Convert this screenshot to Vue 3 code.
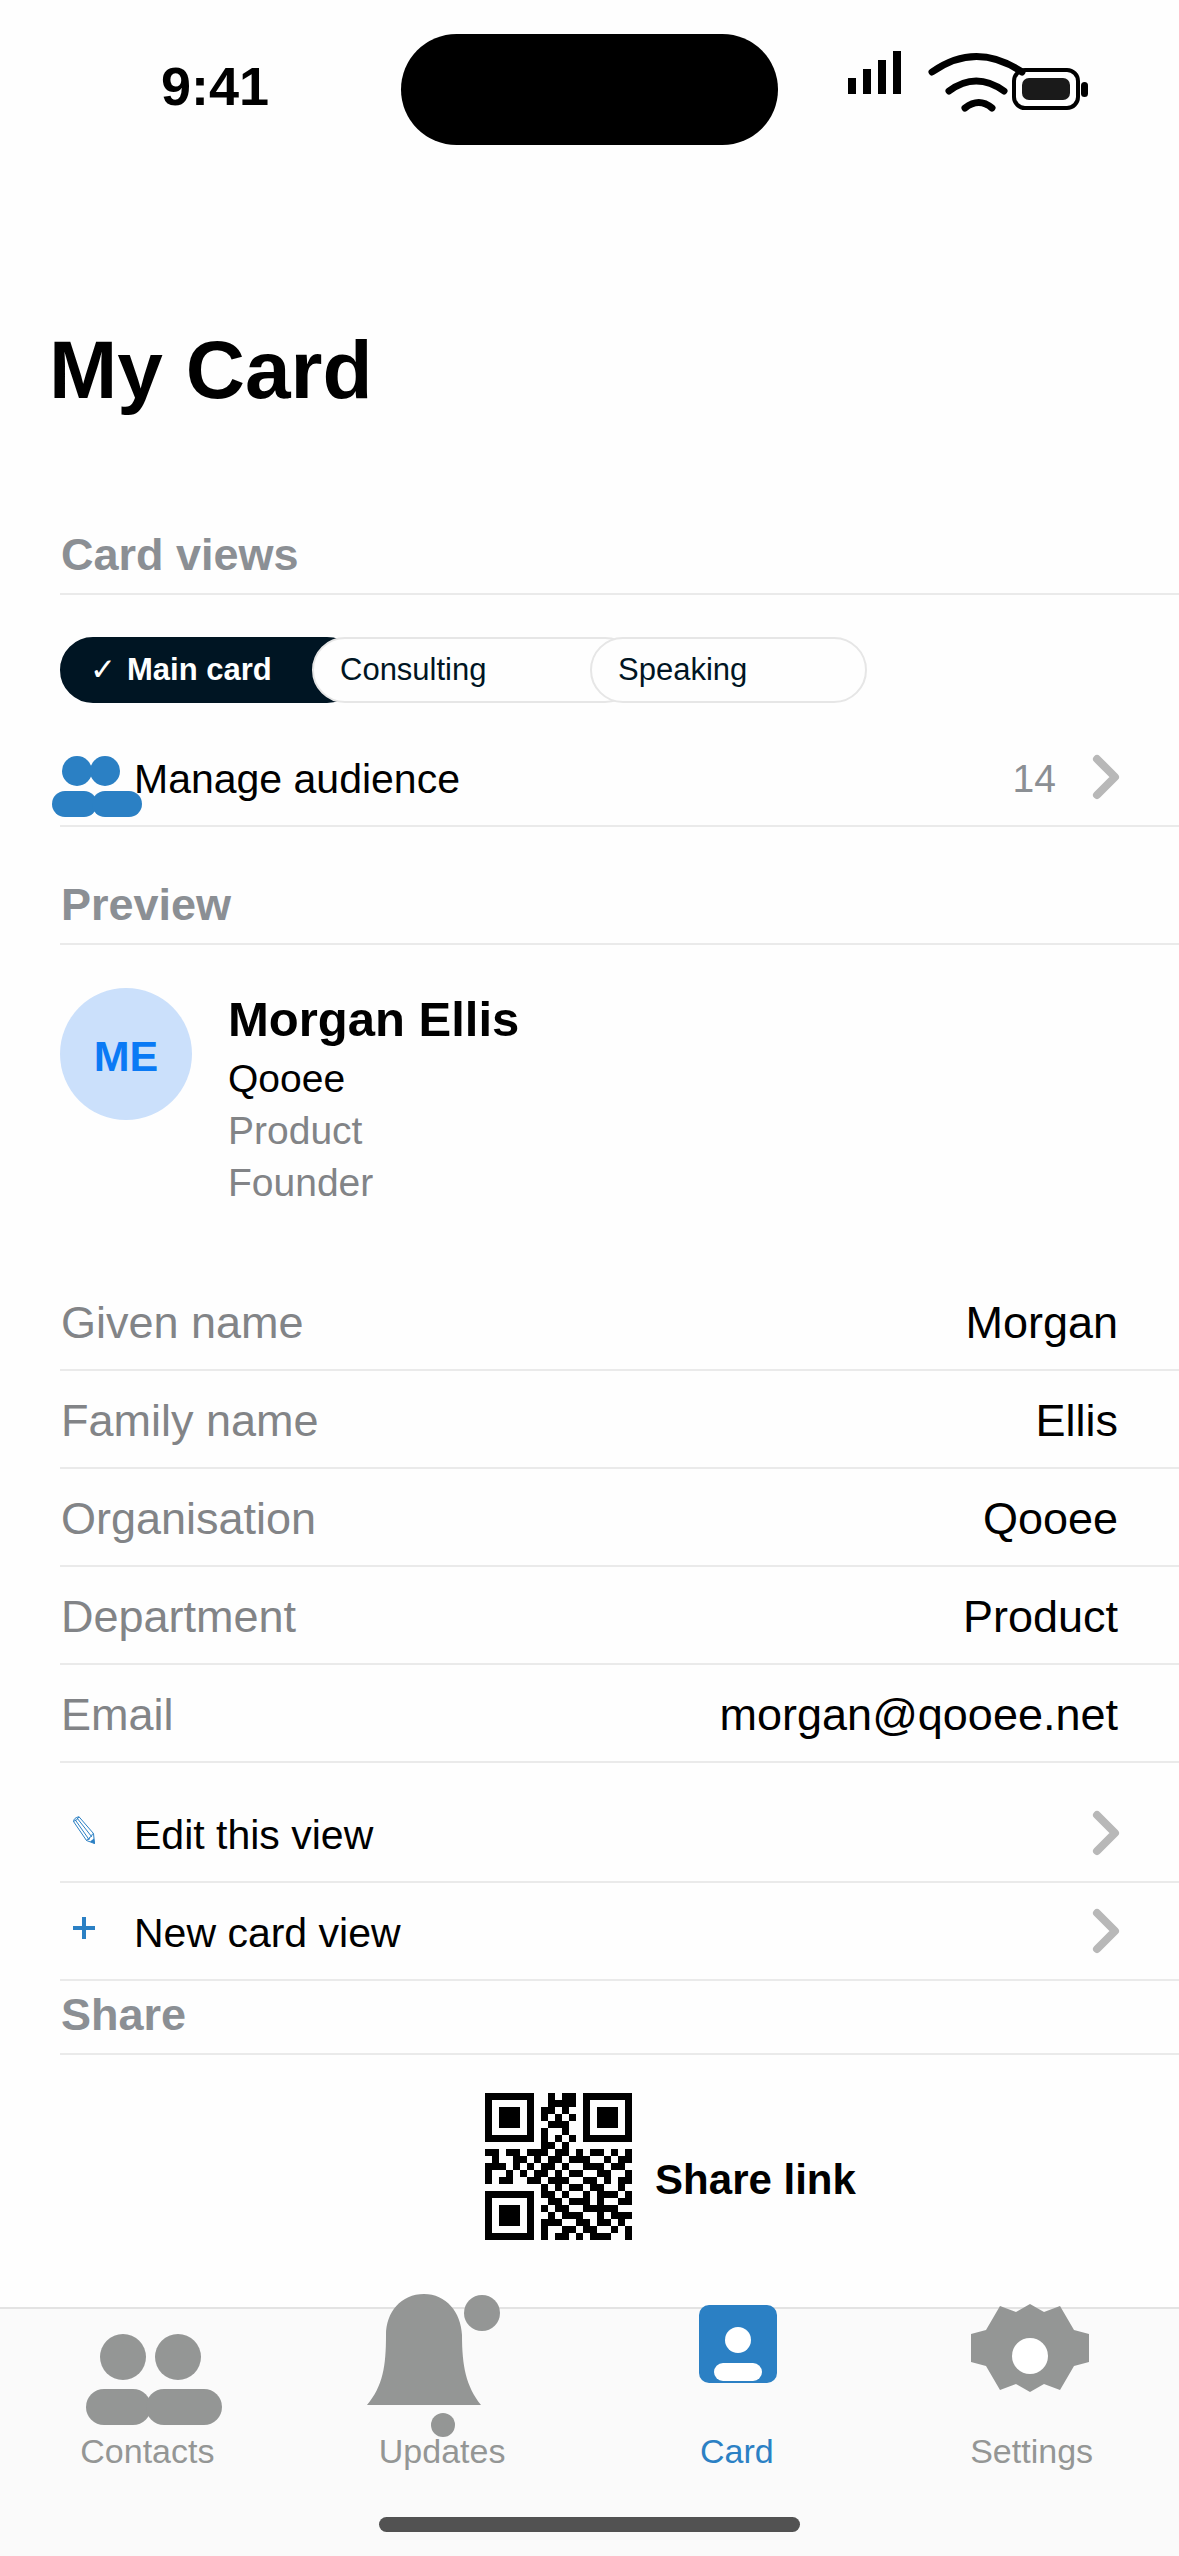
<script setup>
import { ref } from 'vue'

const views = ['Main card', 'Consulting', 'Speaking']
const activeView = ref('Main card')

const fields = [
  { label: 'Given name', value: 'Morgan' },
  { label: 'Family name', value: 'Ellis' },
  { label: 'Organisation', value: 'Qooee' },
  { label: 'Department', value: 'Product' },
  { label: 'Email', value: 'morgan@qooee.net' },
]

const actions = [
  { label: 'Edit this view', kind: 'pencil' },
  { label: 'New card view', kind: 'plus' },
]

const qrRows = [
  '111111100101101111111',
  '100000100111101000001',
  '101110101101001011101',
  '101110101010101011101',
  '101110100111001011101',
  '100000101001001000001',
  '111111101010101111111',
  '000000001101000000000',
  '110110111011010110101',
  '010011010110111001011',
  '111010101101001110110',
  '100101011010110011001',
  '101100110111001101011',
  '000000001010110110010',
  '111111101101001011101',
  '100000100110111010011',
  '101110101011001111100',
  '101110100101110010111',
  '101110101110011011010',
  '100000101001101100101',
  '111111101011010111001',
]
const qrPath = qrRows
  .flatMap((row, y) => [...row].map((bit, x) => (bit === '1' ? `M${x} ${y}h1v1h-1z` : '')))
  .join('')
</script>

<template>
  <div class="screen">
    <header class="status">
      <span class="time">9:41</span>
      <span class="island"></span>
      <svg class="status-icons" width="250" height="111" viewBox="842 34 250 111" aria-hidden="true">
        <path d="M848 78h8v16h-8zM863 69h8v25h-8zM878 60h8v34h-8zM893 51h8v43h-8z" />
        <g fill="none" stroke="#000" stroke-width="7" stroke-linecap="round">
          <path d="M932 72Q976 41 1022 72" />
          <path d="M949 91Q976 71 1004 91" />
          <path d="M965 108Q979 97 992 108" />
        </g>
        <rect x="1014" y="70" width="64" height="38" rx="11" fill="none" stroke="#000" stroke-width="4" />
        <rect x="1022" y="78" width="48" height="22" rx="7" fill="#1a1a1a" />
        <rect x="1081" y="82" width="7" height="15" rx="3.5" />
      </svg>
    </header>

    <main>
      <h1>My Card</h1>

      <section>
        <h2>Card views</h2>
        <div class="pills">
          <button
            v-for="view in views"
            :key="view"
            type="button"
            class="pill"
            :class="{ active: view === activeView }"
            :aria-pressed="view === activeView"
            @click="activeView = view"
          ><span v-if="view === activeView" class="check">✓</span>{{ view }}</button>
        </div>
        <button type="button" class="row">
          <span class="row-icon">
            <svg class="people" width="90" height="62" viewBox="52 756 90 62" fill="#2b80c4" aria-hidden="true">
              <circle cx="78" cy="771" r="15" />
              <circle cx="106" cy="771" r="15" />
              <rect x="53" y="791" width="45" height="26" rx="13" />
              <rect x="93" y="791" width="50" height="26" rx="13" />
            </svg>
          </span>
          <span class="row-label">Manage audience</span>
          <span class="count">14</span>
          <svg class="chevron" width="28" height="46" viewBox="0 0 28 46" aria-hidden="true"><path d="M5 5 23 23 5 41" /></svg>
        </button>
      </section>

      <section class="preview">
        <h2>Preview</h2>
        <div class="profile">
          <div class="avatar">ME</div>
          <div>
            <h3>Morgan Ellis</h3>
            <p>Qooee</p>
            <p class="muted">Product</p>
            <p class="muted">Founder</p>
          </div>
        </div>
        <dl>
          <div v-for="field in fields" :key="field.label" class="field">
            <dt>{{ field.label }}</dt>
            <dd>{{ field.value }}</dd>
          </div>
        </dl>
        <div class="actions">
          <button v-for="action in actions" :key="action.label" type="button" class="row">
            <span class="row-icon">
              <svg v-if="action.kind === 'pencil'" class="glyph" width="24" height="28" viewBox="0 0 24 28" aria-hidden="true">
                <g fill="none" stroke="currentColor" stroke-width="1">
                  <path d="M1.5 5.5Q2 1.5 7 .8L21.500 17.500 22.500 27.500 14.500 24.500Z" />
                  <path d="M3 3.500 17 23.500M5 2 19.500 20.500M14.500 24.500Q15.500 22 17 23.500Q17.500 20 19.500 20.500Q19.500 18 21.500 17.500M1.500 5.500Q5 4.500 7 .8" />
                </g>
                <path d="M18 25.500 22 22.500 23 28Z" fill="currentColor" />
              </svg>
              <svg v-else class="glyph" width="24" height="28" viewBox="0 0 24 28" aria-hidden="true">
                <path d="M10 3h4v9h9v4h-9v9h-4v-9H1v-4h9z" fill="currentColor" />
              </svg>
            </span>
            <span class="row-label">{{ action.label }}</span>
            <svg class="chevron" width="28" height="46" viewBox="0 0 28 46" aria-hidden="true"><path d="M5 5 23 23 5 41" /></svg>
          </button>
        </div>
      </section>

      <section class="share">
        <h2>Share</h2>
        <div class="share-body">
          <svg width="147" height="147" viewBox="0 0 21 21" shape-rendering="crispEdges" role="img" aria-label="QR code">
            <path :d="qrPath" />
          </svg>
          <a href="#share">Share link</a>
        </div>
      </section>
    </main>

    <footer class="tabbar">
      <nav>
        <a href="#contacts">
          <svg width="160" height="140" viewBox="67 2291 160 140" aria-hidden="true">
            <circle cx="123" cy="2357" r="23" />
            <circle cx="178" cy="2357" r="23" />
            <rect x="86" y="2389" width="65" height="36" rx="18" />
            <rect x="146" y="2389" width="76" height="36" rx="18" />
          </svg>
          <span>Contacts</span>
        </a>
        <a href="#updates">
          <svg width="160" height="140" viewBox="362 2291 160 140" aria-hidden="true">
            <path d="M424 2294C401 2294 386 2312 386 2335C386 2366 383 2386 367 2405H481C466 2386 462 2366 462 2335C461 2312 446 2294 424 2294Z" />
            <circle cx="482" cy="2313" r="18" />
            <circle cx="443" cy="2425" r="12" />
          </svg>
          <span>Updates</span>
        </a>
        <a href="#card" class="current" aria-current="page">
          <svg width="160" height="140" viewBox="657 2291 160 140" aria-hidden="true">
            <rect x="699" y="2305" width="78" height="78" rx="10" />
            <circle cx="738" cy="2340" r="13" fill="#fff" />
            <rect x="714" y="2363" width="48" height="18" rx="9" fill="#fff" />
          </svg>
          <span>Card</span>
        </a>
        <a href="#settings">
          <svg width="160" height="140" viewBox="952 2291 160 140" aria-hidden="true">
            <path d="M1030 2304 1044 2312 1060 2306 1074 2330 1089 2334V2362L1074 2366 1060 2390 1044 2384 1030 2392 1016 2384 1000 2390 986 2366 971 2362V2334L986 2330 1000 2306 1016 2312Z" />
            <circle cx="1030" cy="2356" r="18" fill="#fff" />
          </svg>
          <span>Settings</span>
        </a>
      </nav>
      <div class="home"></div>
    </footer>
  </div>
</template>

<style>
body {
  background: #fefefe;
}
</style>

<style scoped>
.screen {
  display: flex;
  flex-direction: column;
  min-height: 100vh;
  color: #000;
  font-family: "Liberation Sans", Arial, "DejaVu Sans", sans-serif;
}

h1, h2, h3, p, dl, dd {
  margin: 0;
}

button {
  padding: 0;
  border: 0;
  background: none;
  color: inherit;
  font: inherit;
  text-align: left;
}

a {
  color: inherit;
  text-decoration: none;
}

svg {
  display: block;
  flex: none;
  overflow: visible;
}

.status {
  display: grid;
  grid-template-columns: 1fr 377px 1fr;
  align-items: center;
  padding-top: 34px;
}

.time {
  padding: 0 0 8px 161px;
  font-size: 54px;
  font-weight: 700;
  line-height: 60px;
}

.island {
  height: 111px;
  border-radius: 56px;
  background: #000;
}

.status-icons {
  margin-left: 64px;
}

main {
  flex: 1;
  padding: 177px 0 67px 60px;
}

h1 {
  margin: 0 0 109px -11px;
  font-size: 82px;
  line-height: 96px;
}

h2 {
  padding: 1px 0 11px 1px;
  border-bottom: 2px solid #eaeaea;
  color: #8b8f94;
  font-size: 45px;
  line-height: 54px;
}

.pills {
  display: flex;
  margin: 42px 0 26px;
}

.pill {
  width: 277px;
  height: 66px;
  padding-left: 26px;
  border: 2px solid #e6e6e6;
  border-radius: 33px;
  background: #fefefe;
  color: #001523;
  font-size: 31px;
  line-height: 36px;
}

.pill + .pill {
  margin-left: -48px;
}

.pill:first-child {
  width: 300px;
}

.pill:nth-child(2) {
  width: 326px;
}

.pill.active {
  padding-left: 28px;
  border-color: #001523;
  background: #001523;
  color: #fff;
  font-weight: 700;
}

.check {
  margin-right: 11px;
}

.row {
  display: flex;
  align-items: center;
  width: 100%;
  height: 98px;
  padding-right: 59px;
  border-bottom: 2px solid #eaeaea;
  font-size: 41px;
  line-height: 48px;
}

.row-icon {
  display: flex;
  justify-content: center;
  width: 48px;
  margin-right: 26px;
  color: #2b80c4;
}

.people {
  margin: 20px -24px 0 0;
}

.glyph {
  margin-bottom: 6px;
}

.row-label {
  flex: 1;
  padding-top: 4px;
}

.count {
  margin-right: 36px;
  padding-top: 4px;
  color: #8b8f94;
  font-size: 39px;
}

.chevron path {
  fill: none;
  stroke: #b8b8b8;
  stroke-width: 8px;
  stroke-linecap: round;
  stroke-linejoin: round;
}

.preview {
  margin-top: 50px;
}

.profile {
  display: flex;
  gap: 36px;
  margin: 43px 0 64px;
}

.avatar {
  display: flex;
  align-items: center;
  justify-content: center;
  width: 132px;
  height: 132px;
  padding-top: 4px;
  box-sizing: border-box;
  border-radius: 50%;
  background: #cbe0fb;
  color: #0a7af5;
  font-size: 43px;
  font-weight: 700;
}

h3 {
  margin: 3px 0 6px;
  font-size: 49px;
  line-height: 56px;
}

.profile p {
  font-size: 39px;
  line-height: 52px;
}

.muted,
dt {
  color: #828487;
}

.field {
  display: flex;
  align-items: center;
  justify-content: space-between;
  height: 98px;
  padding: 4px 61px 0 1px;
  box-sizing: border-box;
  border-bottom: 2px solid #eaeaea;
  font-size: 45px;
  line-height: 54px;
}

.actions {
  margin-top: 22px;
}

.share {
  margin-top: 6px;
}

.share-body {
  display: flex;
  align-items: center;
  justify-content: center;
  gap: 23px;
  margin-top: 38px;
  padding-left: 102px;
}

.share-body a {
  padding-top: 26px;
  font-size: 42px;
  font-weight: 700;
  line-height: 48px;
}

.tabbar {
  padding-bottom: 24px;
  border-top: 2px solid #e3e3e3;
  background: #fafafa;
}

nav {
  display: grid;
  grid-template-columns: repeat(4, 1fr);
}

nav a {
  display: flex;
  flex-direction: column;
  align-items: center;
  margin-top: -18px;
  color: #949695;
  font-size: 34px;
  line-height: 40px;
}

nav svg {
  fill: currentColor;
}

nav .current {
  color: #2b80c4;
}

.home {
  width: 421px;
  height: 15px;
  margin: 46px auto 0;
  border-radius: 8px;
  background: #525252;
}
</style>
